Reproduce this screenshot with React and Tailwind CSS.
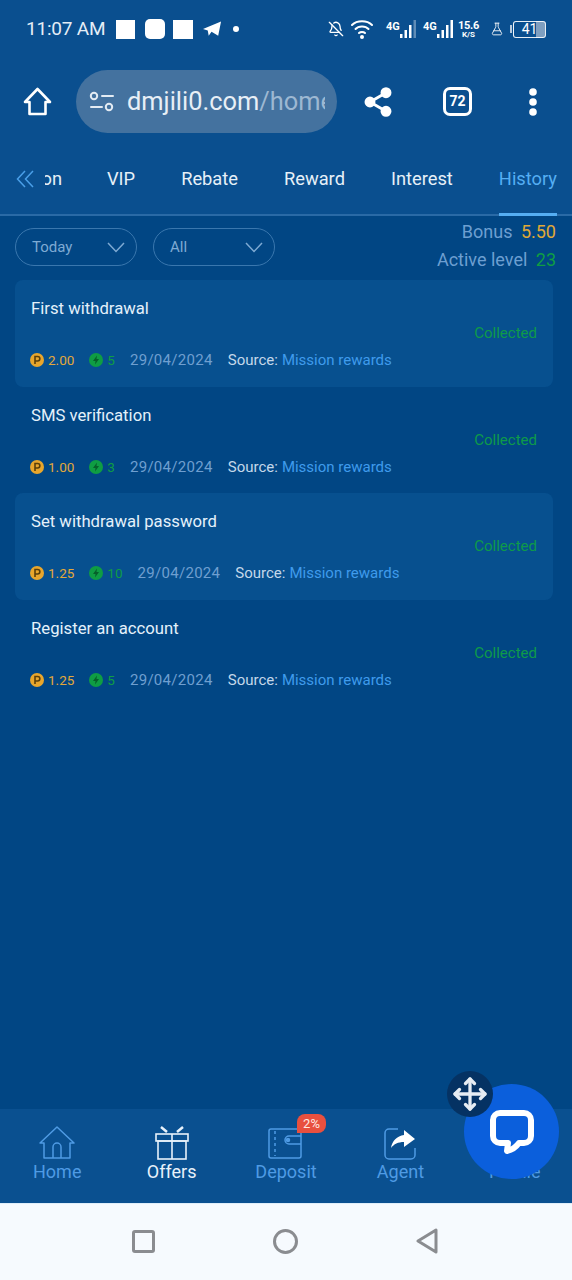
import React from 'react'
import { Share2, Move, BellOff, FlaskConical } from 'lucide-react'

const records = [
  { title: 'First withdrawal', coins: '2.00', level: '5', shaded: true },
  { title: 'SMS verification', coins: '1.00', level: '3', shaded: false },
  { title: 'Set withdrawal password', coins: '1.25', level: '10', shaded: true },
  { title: 'Register an account', coins: '1.25', level: '5', shaded: false },
]

const tabs = ['VIP', 'Rebate', 'Reward', 'Interest']

const Signal = ({ dim, className }) => (
  <svg className={className} width="16" height="20" viewBox="0 0 16 20" fill="white">
    <rect x="0" y="15" width="2.5" height="4" />
    <rect x="4.5" y="11" width="2.5" height="8" />
    <rect x="9" y="6" width="2.5" height="13" />
    <rect x="13.5" y="1" width="2.5" height="18" opacity={dim ? 0.35 : 1} />
  </svg>
)

const StatusBar = () => (
  <div className="h-[56px] flex items-center justify-between pl-[26px] pr-[26px] pt-[2px] text-white">
    <div className="flex items-center">
      <span className="text-[19px] tracking-[-0.2px] text-[#e4edf6]">11:07 AM</span>
      <span className="ml-[11px] w-[19px] h-[19px] bg-white" />
      <span className="ml-[10px] w-[20px] h-[20px] bg-white rounded-[5px]" />
      <span className="ml-[8px] w-[20px] h-[19px] bg-white" />
      <svg className="ml-[10px]" width="19" height="18" viewBox="0 0 20 18" fill="white">
        <path d="M0 9 19 1l-3 15-7-4-3 4-1-5.500z" />
      </svg>
      <span className="ml-[11px] w-[6px] h-[6px] rounded-full bg-white" />
    </div>
    <div className="flex items-center">
      <BellOff className="w-[16px] h-[18px]" strokeWidth={2} />
      <svg className="ml-[7px]" width="22" height="20" viewBox="0 0 22 20" fill="none" stroke="white" strokeWidth="2" strokeLinecap="round">
        <path d="M1 6c5-5 15-5 20 0" />
        <path d="M4.500 10c3-3.500 10-3.500 13 0" />
        <path d="M8 14c1.500-1.500 4.500-1.500 6 0" />
        <circle cx="11" cy="18" r="1" fill="white" />
      </svg>
      <span className="ml-[13px] w-[14px] mb-[6px] text-[11px] leading-none font-bold">4G</span>
      <Signal dim />
      <span className="ml-[7px] w-[14px] mb-[6px] text-[11px] leading-none font-bold">4G</span>
      <Signal />
      <div className="ml-[5px] w-[21px] flex flex-col items-center leading-none font-bold">
        <span className="text-[11px] tracking-[-0.3px]">15.6</span>
        <span className="text-[8px]">K/S</span>
      </div>
      <FlaskConical className="ml-[11px] w-[14px] h-[18px]" strokeWidth={1.5} />
      <span className="ml-[6px] w-[2px] h-[8px] bg-white/70" />
      <div className="ml-[1px] w-[33px] h-[17px] rounded-[3px] border border-white/90 bg-gradient-to-r from-transparent from-70% to-[#7f9fc0] to-70% flex items-center justify-center text-[14px] leading-none">41</div>
    </div>
  </div>
)

const Toolbar = () => (
  <div className="h-[90px] flex items-center pt-[1px] text-white">
    <svg className="ml-[23px]" width="29" height="29" viewBox="0 0 29 29" fill="none" stroke="white" strokeWidth="2.6" strokeLinejoin="round" strokeLinecap="round">
      <path d="M14.500 2 27 15h-4.500v12h-16V15H2z" />
    </svg>
    <div className="ml-[24px] w-[261px] h-[63px] rounded-full bg-[#44729f] flex items-center pl-[13px] pr-[12px]">
      <svg width="26" height="24" viewBox="0 0 26 24" fill="none" stroke="#e3ebf3" strokeWidth="2" strokeLinecap="round" className="shrink-0">
        <circle cx="5" cy="6" r="3.200" />
        <path d="M13 6h11" />
        <circle cx="20" cy="17" r="3.200" />
        <path d="M2 17h11" />
      </svg>
      <div className="ml-[12px] flex-1 overflow-hidden">
        <span className="text-[25.400px] whitespace-nowrap text-[#e8eff6]">dmjili0.com<span className="text-[#9db8d2]">/home</span></span>
      </div>
    </div>
    <Share2 className="ml-[25px] w-[32px] h-[32px]" fill="white" strokeWidth={2.2} />
    <div className="ml-[49px] w-[29px] h-[29px] rounded-[7px] border-[3px] border-white flex items-center justify-center text-[14px] font-bold">72</div>
    <svg className="ml-[53px]" width="16" height="28" viewBox="0 0 16 28" fill="white">
      <circle cx="8" cy="4" r="3.800" />
      <circle cx="8" cy="14" r="3.800" />
      <circle cx="8" cy="24" r="3.800" />
    </svg>
  </div>
)

const Tabs = () => (
  <div className="h-[70px] flex border-b-2 border-[#2a6aa6] text-[18.300px] text-[#e6f0f8]">
    <div className="w-[62px] shrink-0 flex items-center pl-[16px] pb-[2px]">
      <svg width="18" height="18" viewBox="0 0 18 18" fill="none" stroke="#4a9fe8" strokeWidth="1.500" className="shrink-0">
        <path d="M9 1 1.500 9 9 17M17 1 9.500 9l7.500 8" />
      </svg>
      <div className="ml-[11px] w-[17px] flex justify-end overflow-hidden">
        <span className="whitespace-nowrap">Mission</span>
      </div>
    </div>
    <div className="flex flex-1 justify-end gap-[46px] pr-[15px]">
      {tabs.map((t) => (
        <span key={t} className="flex items-center pb-[2px]">{t}</span>
      ))}
      <span className="flex items-center pb-[2px] -mb-[2px] border-b-[3px] border-[#55aef3] text-[#55aef3]">History</span>
    </div>
  </div>
)

const Filter = ({ label }) => (
  <div className="w-[122px] h-[38px] rounded-full border border-[#3a77ae] flex items-center justify-between pl-[16px] pr-[11px] text-[15px] text-[#7eaad3]">
    <span className="pt-[1px]">{label}</span>
    <svg width="18" height="11" viewBox="0 0 18 11" fill="none" stroke="#7eaad3" strokeWidth="1.500">
      <path d="M1 1l8 8.500L17 1" />
    </svg>
  </div>
)

const Record = ({ title, coins, level, shaded }) => (
  <div className={`h-[106.5px] rounded-[8px] pl-[15px] pr-[16px] pt-[19px] ${shaded ? 'bg-[#07508f]' : ''}`}>
    <div className="pl-[1px] text-[16.700px] leading-[20px] text-[#e4f1fb]">{title}</div>
    <div className="flex justify-end mt-[4px] h-[20px] text-[15px] leading-[20px] text-[#0e9a4a]">Collected</div>
    <div className="flex items-center mt-[7px] text-[15px] leading-[20px]">
      <svg width="14" height="14" viewBox="0 0 14 14" className="shrink-0">
        <circle cx="7" cy="7" r="7" fill="#e8a62c" />
        <path d="M5 11V3.500h2.600a2.200 2.200 0 0 1 0 4.500H5" fill="none" stroke="#5a3f0a" strokeWidth="1.600" />
      </svg>
      <span className="ml-[4px] text-[13.500px] text-[#e3a83a]">{coins}</span>
      <svg width="14" height="14" viewBox="0 0 14 14" className="ml-[15px] shrink-0">
        <circle cx="7" cy="7" r="7" fill="#0f9d43" />
        <path d="M8 2.500 4 8h2.500L6 11.500 10 6H7.500z" fill="#06602a" />
      </svg>
      <span className="ml-[4px] text-[13.500px] text-[#0f9d43]">{level}</span>
      <span className="ml-[15px] tracking-[0.3px] text-[#6f9fd0]">29/04/2024</span>
      <span className="ml-[15px] text-[#c4d8ea]">Source:</span>
      <span className="ml-[4px] text-[#3f9bec]">Mission rewards</span>
    </div>
  </div>
)

const NavItem = ({ label, active, children }) => (
  <div className={`flex-1 flex flex-col items-center ${active ? 'text-[#e8f2fb]' : 'text-[#4f9be4]'}`}>
    <div className="h-[36px] flex items-end">{children}</div>
    <span className="mt-[1px] text-[18px] leading-[22px]">{label}</span>
  </div>
)

export default function App() {
  return (
    <div className="relative w-[572px] h-[1280px] flex flex-col bg-[#014684] overflow-hidden font-['Roboto',sans-serif]">
      <div className="bg-[#0a4f8f]">
        <StatusBar />
        <Toolbar />
        <Tabs />
      </div>

      <div className="h-[64px] flex pl-[15px] pr-[16px]">
        <div className="flex gap-[16px] pt-[12px]">
          <Filter label="Today" />
          <Filter label="All" />
        </div>
        <div className="ml-auto flex flex-col items-end text-[18px] leading-[28px] pt-[2px] text-[#6d9fd1]">
          <div>Bonus <span className="ml-[4px] text-[#e0a936]">5.50</span></div>
          <div>Active level <span className="ml-[4px] text-[#0f9d43]">23</span></div>
        </div>
      </div>

      <div className="flex-1 px-[15px] pr-[19px]">
        {records.map((r) => (
          <Record key={r.title} {...r} />
        ))}
      </div>

      <div className="h-[94px] flex bg-[#0a5090] pt-[15px]">
        <NavItem label="Home">
          <svg width="38" height="34" viewBox="0 0 38 34" fill="none" stroke="currentColor" strokeWidth="1.500" strokeLinejoin="round">
            <path d="M2 17 19 1l17 16h-4v15H6V17z" />
            <path d="M15 32V21a4 4 0 0 1 8 0v11" />
          </svg>
        </NavItem>
        <NavItem label="Offers" active>
          <svg width="34" height="34" viewBox="0 0 34 34" fill="none" stroke="currentColor" strokeWidth="1.600">
            <rect x="1" y="8" width="32" height="7" />
            <rect x="3" y="15" width="28" height="18" />
            <path d="M17 8v25" />
            <path d="M6 1l6 5M28 1l-6 5" strokeWidth="2.500" />
          </svg>
        </NavItem>
        <NavItem label="Deposit">
          <svg width="36" height="32" viewBox="0 0 36 32" fill="none" stroke="currentColor" strokeWidth="1.500">
            <rect x="1" y="1" width="32" height="29" rx="2" />
            <path d="M7 3v25" strokeDasharray="3 3" />
            <path d="M33 8H21a4 4 0 0 0 0 8h12" />
            <circle cx="20" cy="12" r="1.500" fill="currentColor" />
          </svg>
        </NavItem>
        <NavItem label="Agent">
          <svg width="32" height="32" viewBox="0 0 32 32" fill="none" stroke="currentColor" strokeWidth="1.500">
            <path d="M14 1H5a4 4 0 0 0-4 4v22a4 4 0 0 0 4 4h22a4 4 0 0 0 4-4v-7" />
            <path d="M20 2l11 9-11 8v-5c-6 0-10 2-13 6 1-7 6-12 13-13z" fill="white" stroke="none" />
          </svg>
        </NavItem>
        <NavItem label="Profile">
          <div className="h-[34px]" />
        </NavItem>
      </div>

      <div className="h-[77px] bg-[#f6fafe] border-t border-[#dfeefa] flex items-center pb-[2px] pl-[132px] gap-[118px]">
        <span className="w-[23px] h-[23px] border-[3px] border-[#8a8c90] rounded-[3px]" />
        <span className="w-[25px] h-[25px] border-[3px] border-[#8a8c90] rounded-full" />
        <svg width="24" height="26" viewBox="0 0 24 26" fill="none" stroke="#8a8c90" strokeWidth="3" strokeLinejoin="round" className="-ml-[1px]">
          <path d="M21 2v22L3 13z" />
        </svg>
      </div>

      {/* floating chat button sits on top of the nav */}
      <div className="absolute left-[464px] top-[1084px] w-[95px] h-[95px] rounded-full bg-[#0b5fdc] flex items-center justify-center">
        <svg width="46" height="46" viewBox="0 0 46 46" fill="none">
          <path d="M11 4h24a7 7 0 0 1 7 7v16a7 7 0 0 1-7 7h-5c-3 4-7 7-12 8l1-8h-8a7 7 0 0 1-7-7V11a7 7 0 0 1 7-7z" stroke="white" strokeWidth="6" strokeLinejoin="round" fill="#0b5fdc" />
        </svg>
      </div>
      <div className="absolute left-[447px] top-[1071px] w-[46px] h-[46px] rounded-full bg-[#053263] flex items-center justify-center">
        <Move className="w-[36px] h-[36px] text-[#e6ecf3]" strokeWidth={2.2} />
      </div>
      <div className="absolute left-[297px] top-[1114px] w-[29px] h-[19px] rounded-[8px] rounded-bl-none bg-[#e8503f] flex items-center justify-center text-[13px] leading-none text-[#ffe9e4]">2%</div>
    </div>
  )
}
